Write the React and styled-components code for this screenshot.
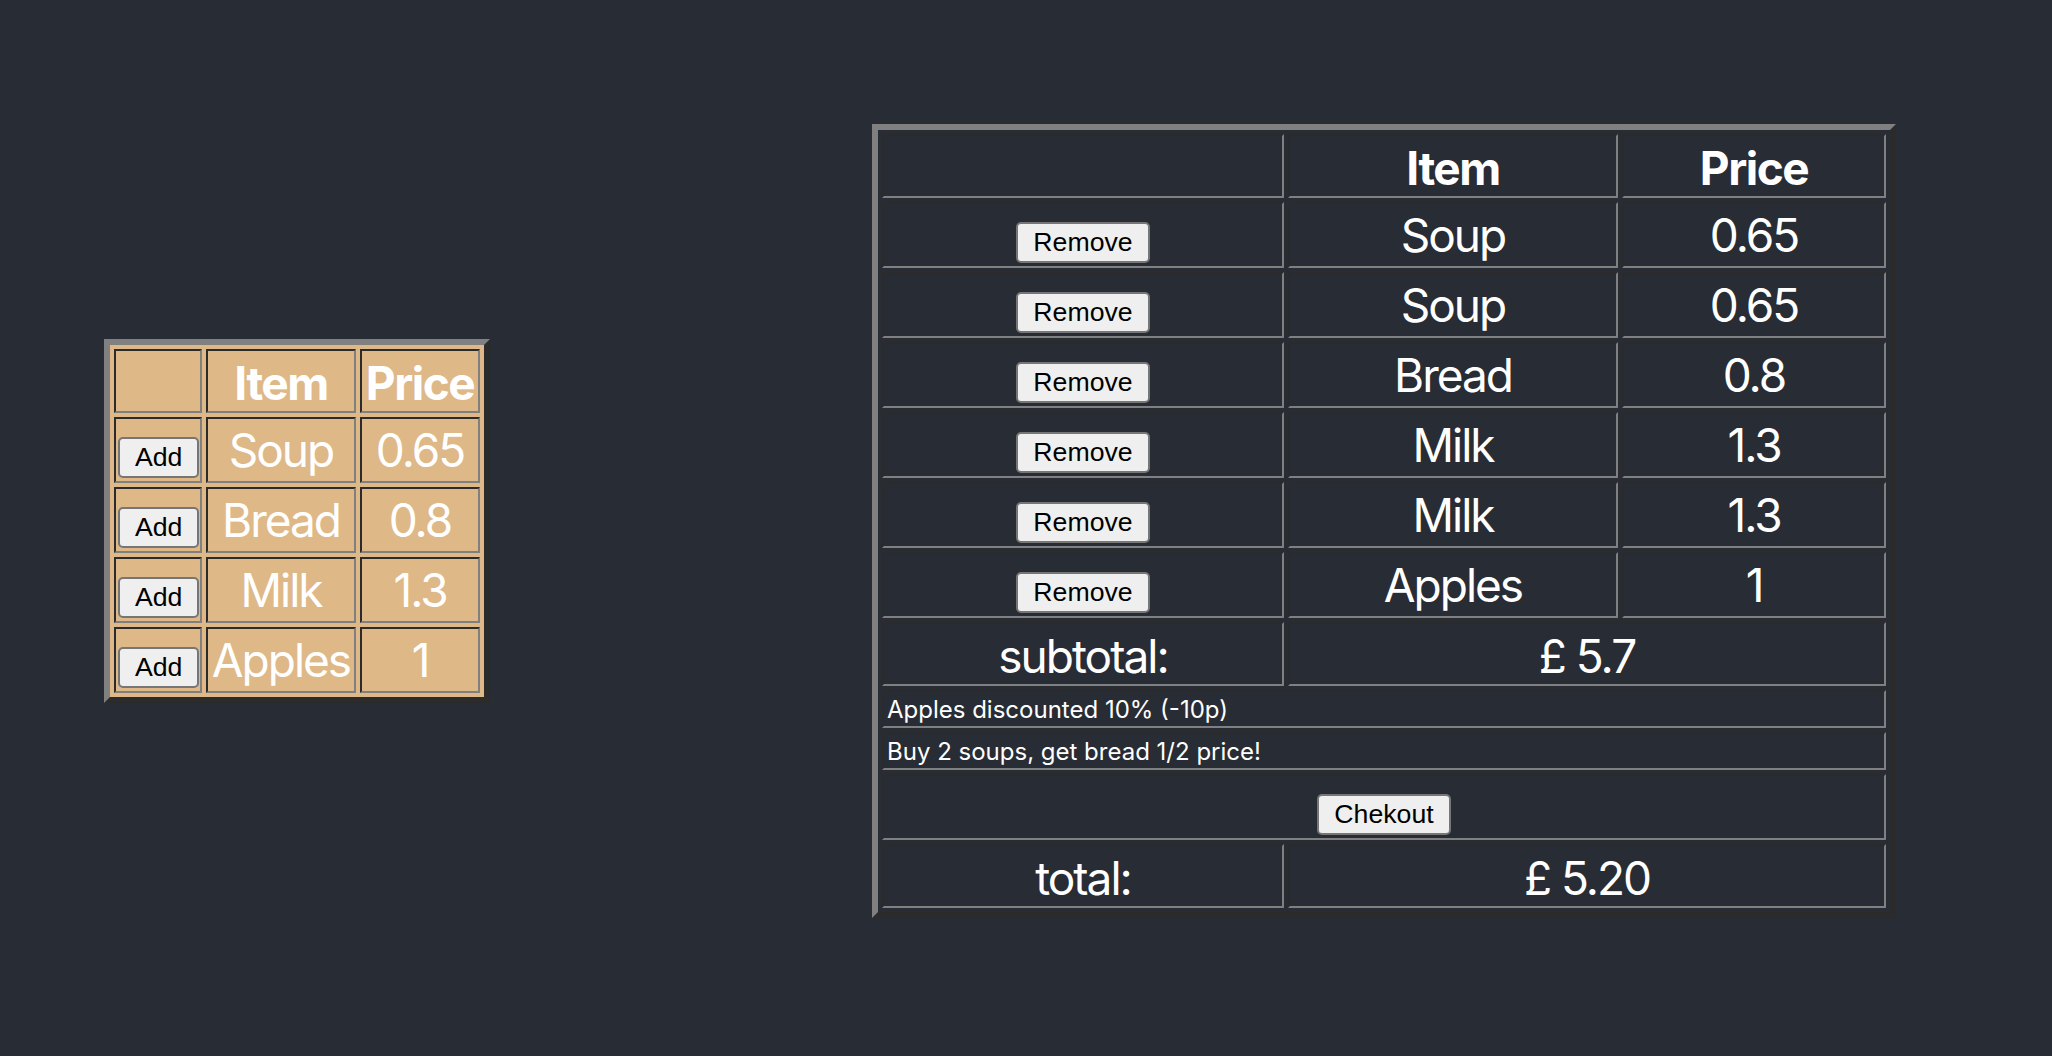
import React from 'react';
import styled, { createGlobalStyle } from 'styled-components';

const GlobalStyle = createGlobalStyle`
  body {
    margin: 0;
    background: #282c34;
    font-family: Inter, "Noto Sans", sans-serif;
  }
`;

const Page = styled.div`
  height: 1041px;
  display: flex;
  align-items: center;
  gap: 382px;
  padding-left: 104px;
`;

const Table = styled.table`
  table-layout: fixed;
  width: ${p => p.$width}px;
  border-collapse: separate;
  border-spacing: 4px;
  border: 6px solid;
  border-color: #808080 #2b2b2b #2b2b2b #808080;
  background: ${p => (p.$tan ? '#deb887' : 'transparent')};
  color: #fff;
  font-size: 46px;
  letter-spacing: -2px;
`;

const Col = styled.col`
  width: ${p => p.$w}px;
`;

const Row = styled.tr`
  height: ${p => p.$h}px;
`;

const Cell = styled.td`
  padding: ${p => (p.$lower ? '4px 2px 0' : '2px')};
  border: 2px solid;
  border-color: #2b2b2b #808080 #808080 #2b2b2b;
  text-align: ${p => p.$align || 'center'};
  vertical-align: middle;
  white-space: nowrap;
  line-height: normal;
`;

const HeadCell = styled(Cell).attrs({ as: 'th', $lower: true })`
  font-weight: 700;
  letter-spacing: -1.5px;
`;

const Note = styled(Cell)`
  padding: 3px 2px 1px 3px;
  font-size: 24px;
  line-height: 30px;
  letter-spacing: 0;
`;

const Button = styled.button`
  height: 41px;
  padding: 0 15px;
  border: 2px solid #767676;
  border-radius: 5px;
  background: #efefef;
  color: #000;
  font-family: "Liberation Sans", Arial, sans-serif;
  font-size: 26.67px;
  letter-spacing: 0;
  vertical-align: baseline;
`;

const products = [
  { name: 'Soup', price: '0.65' },
  { name: 'Bread', price: '0.8' },
  { name: 'Milk', price: '1.3' },
  { name: 'Apples', price: '1' },
];

const basket = ['Soup', 'Soup', 'Bread', 'Milk', 'Milk', 'Apples'].map(
  n => products.find(p => p.name === n)
);

const offers = ['Apples discounted 10% (-10p)', 'Buy 2 soups, get bread 1/2 price!'];

const Header = () => (
  <Row $h={64}>
    <HeadCell />
    <HeadCell>Item</HeadCell>
    <HeadCell>Price</HeadCell>
  </Row>
);

export default function App() {
  return (
    <>
      <GlobalStyle />
      <Page>
        <Table $tan $width={386}>
          <colgroup>
            <Col $w={88} />
            <Col $w={150} />
            <Col $w={120} />
          </colgroup>
          <tbody>
            <Header />
            {products.map(p => (
              <Row $h={66} key={p.name}>
                <Cell>
                  <Button>Add</Button>
                </Cell>
                <Cell>{p.name}</Cell>
                <Cell>{p.price}</Cell>
              </Row>
            ))}
          </tbody>
        </Table>

        <Table $width={1024}>
          <colgroup>
            <Col $w={402} />
            <Col $w={330} />
            <Col $w={264} />
          </colgroup>
          <tbody>
            <Header />
            {basket.map((p, i) => (
              <Row $h={66} key={i}>
                <Cell>
                  <Button>Remove</Button>
                </Cell>
                <Cell>{p.name}</Cell>
                <Cell>{p.price}</Cell>
              </Row>
            ))}
            <Row $h={64}>
              <Cell $lower>subtotal:</Cell>
              <Cell $lower colSpan={2}>£ 5.7</Cell>
            </Row>
            {offers.map(o => (
              <Row $h={38} key={o}>
                <Note colSpan={3} $align="left">
                  {o}
                </Note>
              </Row>
            ))}
            <Row $h={66}>
              <Cell colSpan={3}>
                <Button>Chekout</Button>
              </Cell>
            </Row>
            <Row $h={64}>
              <Cell $lower>total:</Cell>
              <Cell $lower colSpan={2}>£ 5.20</Cell>
            </Row>
          </tbody>
        </Table>
      </Page>
    </>
  );
}
